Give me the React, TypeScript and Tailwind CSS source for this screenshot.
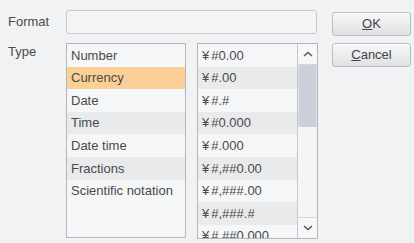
import React from 'react';

const types = ['Number', 'Currency', 'Date', 'Time', 'Date time', 'Fractions', 'Scientific notation'];
const formats = [
  '#0.00',
  '#.00',
  '#.#',
  '#0.000',
  '#.000',
  '#,##0.00',
  '#,###.00',
  '#,###.#',
  '#,##0.000',
];

function rowBg(i: number, selected: boolean) {
  if (selected) return 'bg-[#fbd096]';
  return i % 2 === 1 ? 'bg-[#e9eaec]' : 'bg-[#f5f6f7]';
}

function Chevron({ up }: { up?: boolean }) {
  return (
    <svg width="10" height="6" viewBox="0 0 10 6" className={up ? '' : 'rotate-180'}>
      <path d="M1 5 L5 1.5 L9 5" fill="none" stroke="#5a5a5a" strokeWidth="1.6" />
    </svg>
  );
}

function DialogButton({ accel, rest }: { accel: string; rest: string }) {
  return (
    <button
      type="button"
      className="h-[24px] w-[79px] rounded-[3px] border border-[#b9bcc0] bg-gradient-to-b from-[#f7f8f9] to-[#dfe1e4] text-[13px] text-[#444] shadow-[inset_0_1px_0_#fff]"
    >
      <span className="underline">{accel}</span>
      {rest}
    </button>
  );
}

export default function App() {
  return (
    <div className="h-[243px] w-[414px] bg-[#f1f2f3] font-['Liberation_Sans',Arial,sans-serif] text-[13px] text-[#4a4a4a]">
      <div className="flex pt-[10px]">
        <div className="w-[66px] shrink-0 pl-[8px]">
          <div className="flex h-[24px] items-center">Format</div>
          <div className="mt-[9px] flex h-[18px] items-center">Type</div>
        </div>

        <div className="flex w-[252px] flex-col">
          <div className="h-[24px] w-[251px] rounded-[3px] border border-[#c6c9cc] bg-[#f3f4f5]" />
          <div className="mt-[9px] flex gap-[11px]">
            <div className="h-[195px] w-[120px] overflow-hidden border border-[#b4b7bb] bg-[#f5f6f7]">
              {types.map((t, i) => (
                <div
                  key={t}
                  className={`flex h-[22.6px] items-center whitespace-nowrap pl-[4px] ${rowBg(i, t === 'Currency')}`}
                >
                  {t}
                </div>
              ))}
            </div>
            <div className="flex h-[196px] w-[121px] overflow-hidden border border-[#b4b7bb] bg-[#f5f6f7]">
              <div className="flex-1 overflow-hidden">
                {formats.map((f, i) => (
                  <div key={f} className={`flex h-[22.6px] items-center whitespace-nowrap pl-[4px] ${rowBg(i, false)}`}>
                    <span className="mr-[2px]">¥</span>
                    {f}
                  </div>
                ))}
              </div>
              <div className="flex w-[20px] flex-col border-l border-[#c4c7cb] bg-[#f4f5f6]">
                <div className="flex h-[21px] items-center justify-center border-b border-[#d4d7da] bg-[#f6f7f8]">
                  <Chevron up />
                </div>
                <div className="h-[62px] border-x border-[#dde1e6] bg-[#c9d0d9]" />
                <div className="flex-1 border-b border-[#d4d7da]" />
                <div className="flex h-[20px] items-center justify-center bg-[#f6f7f8]">
                  <Chevron />
                </div>
              </div>
            </div>
          </div>
        </div>

        <div className="ml-[14px] flex flex-col gap-[7px] pt-[2px]">
          <DialogButton accel="O" rest="K" />
          <DialogButton accel="C" rest="ancel" />
        </div>
      </div>
    </div>
  );
}
